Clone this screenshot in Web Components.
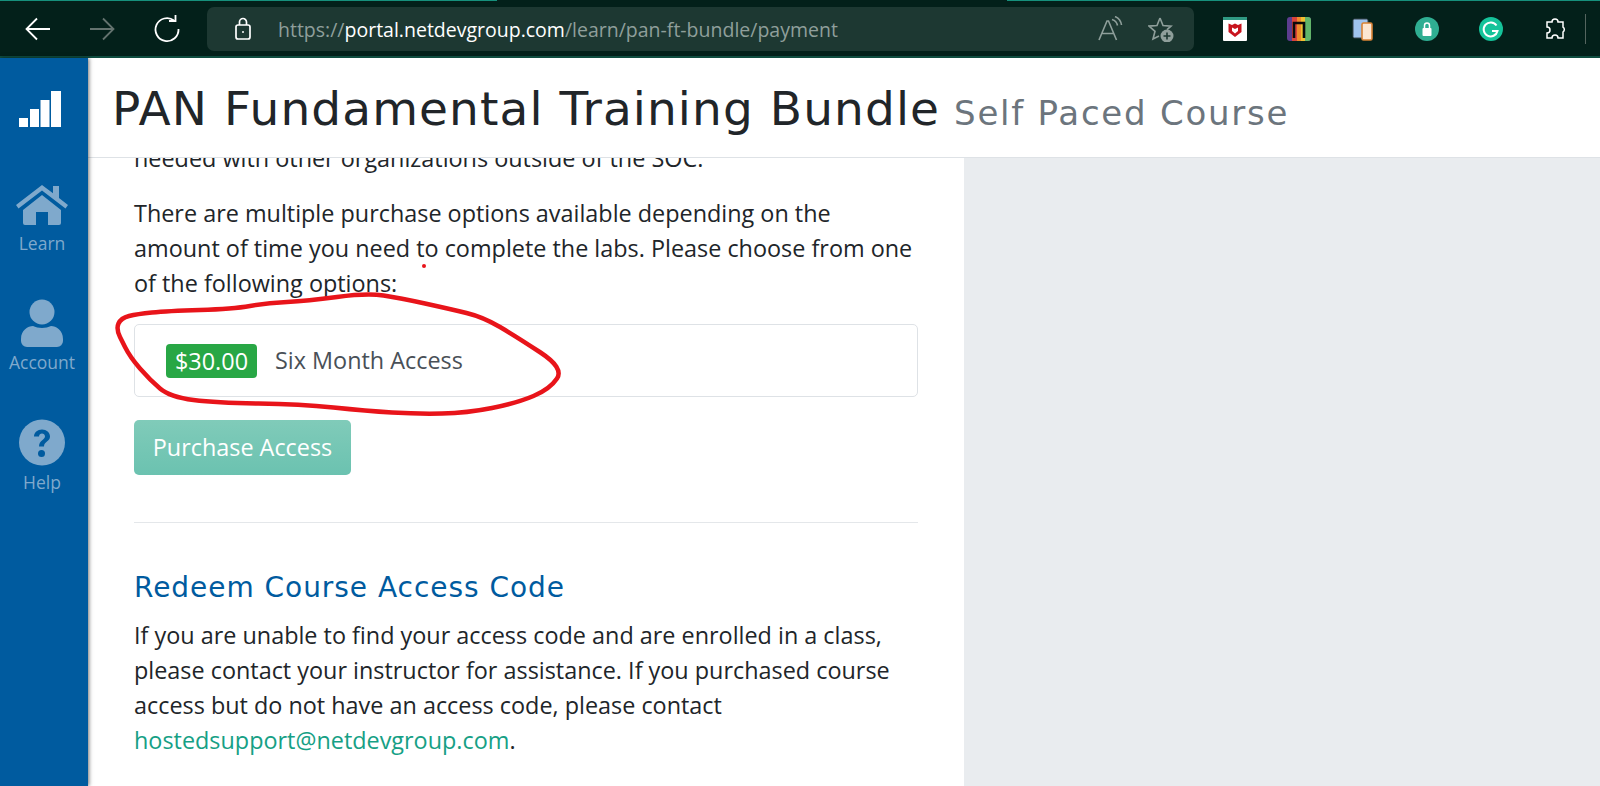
<!DOCTYPE html>
<html>
<head>
<meta charset="utf-8">
<style>
html, body { margin: 0; height: 100%; overflow: hidden; }
body { font-family: "Open Sans", sans-serif; display: flex; flex-direction: column; background: #fff; }
</style>
</head>
<body>
<browser-bar></browser-bar>
<page-shell>
  <side-nav slot="nav"></side-nav>
  <page-header slot="head" title-text="PAN Fundamental Training Bundle" sub-text="Self Paced Course"></page-header>
  <course-panel slot="main"></course-panel>
</page-shell>

<script>
const barTemplate = document.createElement('template')
barTemplate.innerHTML = `
<style>
:host { display: block; flex: none; height: 58px; box-sizing: border-box; background: #03201a; position: relative; border-bottom: 2px solid #0f4d40; }
#wrapper { display: flex; align-items: center; height: 56px; padding-left: 22px; padding-top: 2px; box-sizing: border-box; }
.line { position: absolute; top: 0; height: 1px; background: #16907c; }
.nav { width: 30px; height: 30px; flex: none; }
.nav + .nav { margin-left: 35px; }
#address { margin-left: 25px; width: 987px; height: 44px; box-sizing: border-box; background: #1d3832; border-radius: 7px; display: flex; align-items: center; padding: 0 20px 0 27px; flex: none; }
#url { margin-left: 26px; font: 19.5px "Open Sans", sans-serif; color: #8f9f9b; flex: 1; white-space: nowrap; }
#url b { font-weight: 400; color: #fff; }
.tool { width: 26px; height: 26px; flex: none; }
.tool + .tool { margin-left: 24px; }
#exts { display: flex; align-items: center; margin-left: 29px; gap: 40px; }
#divider { width: 1px; height: 30px; background: #55655f; margin-left: 18px; }
</style>
<div class="line" style="left:0;width:497px"></div>
<div class="line" style="left:1007px;right:0"></div>
<div id="wrapper">
  <svg class="nav" viewBox="0 0 30 30" fill="none" stroke="#fff" stroke-width="1.8"><path d="M28 15H5M15 4.500L4.500 15 15 25.500"/></svg>
  <svg class="nav" viewBox="0 0 30 30" fill="none" stroke="#64736f" stroke-width="1.8"><path d="M3 15h23M16 4.500L26.500 15 16 25.500"/></svg>
  <svg class="nav" viewBox="0 0 30 30" fill="none" stroke="#fff" stroke-width="1.8"><path d="M22 6.500A11.500 11.500 0 1 0 26.500 15"/><path d="M17 7h6.500V1"/></svg>
  <div id="address">
    <svg width="18" height="24" viewBox="0 0 18 24" fill="none" stroke="#fff" stroke-width="1.7"><rect x="2" y="8" width="14" height="14" rx="2"/><path d="M5.500 8V5a3.500 3.500 0 0 1 7 0v3"/><circle cx="9" cy="15" r="1" fill="#fff" stroke="none"/></svg>
    <div id="url">https://<b>portal.netdevgroup.com</b>/learn/pan-ft-bundle/payment</div>
    <svg class="tool" viewBox="0 0 26 26" fill="none" stroke="#8f9f9b" stroke-width="1.6"><path d="M1 24L9 5h1.500l8 19M4 17.500h12"/><path d="M14 3.500c3 1 5 3 5.500 6M17 .5c3.500 1.500 6 5 6.500 8.500"/></svg>
    <svg class="tool" viewBox="0 0 26 26" fill="none" stroke="#8f9f9b" stroke-width="1.6"><path d="M12 2l3 7.500 8 .6-4 3.500M12 2L9 9.500l-8 .6 6 5.200L5 23l6-3"/><circle cx="19" cy="20" r="6.500" fill="#8f9f9b" stroke="none"/><path d="M19 16.500v7M15.500 20h7" stroke="#1d3832" stroke-width="1.6"/></svg>
  </div>
  <div id="exts">
    <svg width="24" height="24" viewBox="0 0 24 24"><rect width="24" height="24" rx="1" fill="#fff"/><rect width="24" height="3" fill="#2f9a83"/><path d="M5.500 6.500l3.500 1.500 3-1.500 3 1.500 3.500-1.500v8.500l-6.500 5-6.500-5z" fill="#c8141e"/><path d="M9 10.500l3 1.500 3-1.500v3.500l-3 2.500-3-2.500z" fill="#fff"/></svg>
    <svg width="24" height="24" viewBox="0 0 24 24"><rect width="24" height="24" rx="3" fill="#5c3d8f"/><rect x="5" width="5" height="24" fill="#d8433a"/><rect x="10" width="4" height="24" fill="#ef8a2c"/><rect x="14" width="4" height="24" fill="#f0c030"/><path d="M18 0h3a3 3 0 0 1 3 3v18a3 3 0 0 1-3 3h-3z" fill="#62b56a"/><path d="M7 21V6h10v15" fill="none" stroke="#0b0b0b" stroke-width="2.600"/></svg>
    <svg width="24" height="24" viewBox="0 0 24 24"><rect x="2" y="2" width="15" height="19" rx="1.500" fill="#9fc3ee" stroke="#36424a"/><rect x="11" y="6" width="10" height="17" rx="1.500" fill="#fde6d2" stroke="#d98235" stroke-width="1.600"/></svg>
    <svg width="24" height="24" viewBox="0 0 24 24"><circle cx="12" cy="12" r="12" fill="#2fae92"/><rect x="7.500" y="11" width="9" height="8" rx="1" fill="#fff"/><path d="M9.500 11V8.500a2.500 2.500 0 0 1 5 0V11" fill="none" stroke="#fff" stroke-width="1.500"/></svg>
    <svg width="24" height="24" viewBox="0 0 24 24"><circle cx="12" cy="12" r="12" fill="#15c39a"/><path d="M17.500 8.500A7 7 0 1 0 18.500 14H13" fill="none" stroke="#fff" stroke-width="2"/></svg>
    <svg width="24" height="24" viewBox="0 0 24 24" fill="none" stroke="#fff" stroke-width="1.500"><path d="M9 5a3 3 0 0 1 6 0h5v5a3 3 0 0 1 0 5v6h-5a3 3 0 0 0-6 0H4v-5a3 3 0 0 0 0-6V5z"/></svg>
  </div>
  <div id="divider"></div>
</div>
`
customElements.define('browser-bar',
  class extends HTMLElement {
    constructor () {
      super()
      this.attachShadow({ mode: 'open' })
        .appendChild(barTemplate.content.cloneNode(true))
    }
  }
)

const shellTemplate = document.createElement('template')
shellTemplate.innerHTML = `
<style>
:host { display: flex; flex: 1; min-height: 0; }
#right { flex: 1; min-width: 0; display: flex; flex-direction: column; }
#body { flex: 1; min-height: 0; overflow: hidden; display: flex; background: #e9ecef; }
</style>
<slot name="nav"></slot>
<div id="right">
  <slot name="head"></slot>
  <div id="body"><slot name="main"></slot></div>
</div>
`
customElements.define('page-shell',
  class extends HTMLElement {
    constructor () {
      super()
      this.attachShadow({ mode: 'open' })
        .appendChild(shellTemplate.content.cloneNode(true))
    }
  }
)

const navTemplate = document.createElement('template')
navTemplate.innerHTML = `
<style>
:host { display: flex; flex-direction: column; align-items: center; flex: none; width: 88px; box-sizing: border-box; padding-right: 4px; background: #005b9f; box-shadow: 1px 0 4px rgba(0,0,0,.55); position: relative; z-index: 2; font: 17.500px/24px "Open Sans", sans-serif; color: #7fa9cc; }
#logo { margin-top: 33px; margin-right: 4px; }
.item { display: flex; flex-direction: column; align-items: center; }
svg { display: block; }
</style>
<svg id="logo" width="42" height="36" viewBox="0 0 42 36" fill="#fff"><rect x="0" y="27" width="9" height="9"/><rect x="11" y="18" width="9" height="18"/><rect x="21.500" y="9" width="9" height="27"/><rect x="32" y="0" width="10" height="36"/></svg>
<div class="item" style="margin-top:56px">
  <svg width="54" height="42" viewBox="0 0 54 42" fill="#7fa9cc"><path d="M27 2L1 22l2.500 3.500L27 7.500l23.500 18L53 22l-9-7V3h-6v7.300z"/><path d="M8 27L27 12l19 15v13a2 2 0 0 1-2 2H33V29H21v13H10a2 2 0 0 1-2-2z"/></svg>
  <span style="margin-top:6px">Learn</span>
</div>
<div class="item" style="margin-top:44px">
  <svg width="42" height="48" viewBox="0 0 42 48" fill="#7fa9cc"><circle cx="21" cy="13" r="12.500"/><path d="M0 40c0-9 7-13 12-13 5 2.500 13 2.500 18 0 5 0 12 4 12 13v2a6 6 0 0 1-6 6H6a6 6 0 0 1-6-6z"/></svg>
  <span style="margin-top:3px">Account</span>
</div>
<div class="item" style="margin-top:45px">
  <svg width="46" height="47" viewBox="0 0 46 46"><circle cx="23" cy="23" r="23" fill="#7fa9cc"/><path d="M15 17c0-4 3.500-7 8-7s8 3 8 7c0 5-6 5-6 10h-5c0-6 6-7 6-10 0-2-1.500-3-3-3s-3 1-3 3z" fill="#005b9f"/><circle cx="22.500" cy="34" r="3.500" fill="#005b9f"/></svg>
  <span style="margin-top:4px">Help</span>
</div>
`
customElements.define('side-nav',
  class extends HTMLElement {
    constructor () {
      super()
      this.attachShadow({ mode: 'open' })
        .appendChild(navTemplate.content.cloneNode(true))
    }
  }
)

const headerTemplate = document.createElement('template')
headerTemplate.innerHTML = `
<style>
:host { display: flex; flex: none; align-items: baseline; height: 100px; box-sizing: border-box; padding: 21px 0 0 24px; background: #fff; border-bottom: 1px solid #dee2e6; position: relative; z-index: 1; white-space: nowrap; font-family: "DejaVu Sans", sans-serif; }
#title { font-size: 47px; letter-spacing: 1.100px; line-height: 60px; color: #212529; font-weight: 400; margin: 0; }
#sub { font-size: 34px; letter-spacing: 1.750px; color: #6c757d; margin-left: 14px; }
</style>
<h1 id="title"></h1><span id="sub"></span>
`
customElements.define('page-header',
  class extends HTMLElement {
    constructor () {
      super()
      this.attachShadow({ mode: 'open' })
        .appendChild(headerTemplate.content.cloneNode(true))
      this.shadowRoot.querySelector('#title').textContent = this.getAttribute('title-text')
      this.shadowRoot.querySelector('#sub').textContent = this.getAttribute('sub-text')
    }
  }
)

const inkPoints = [[120, 337], [116, 329], [121, 318], [137, 314], [167, 311], [233, 309], [267, 303], [307, 301], [367, 293], [400, 298], [450, 309], [483, 317], [517, 337], [564, 368], [550, 389], [517, 403], [467, 413], [417, 414], [367, 411], [300, 404], [217, 403], [170, 397], [150, 380], [130, 357], [120, 337]]

const panelTemplate = document.createElement('template')
panelTemplate.innerHTML = `
<style>
:host { display: block; width: 876px; flex: none; box-sizing: border-box; padding: 0 46px; background: #fff; font: 23.400px/35px "Open Sans", sans-serif; color: #212529; position: relative; }
p { margin: 0; }
#cut { margin-top: -17px; }
#intro { margin-top: 20px; }
#option { margin-top: 23px; height: 73px; box-sizing: border-box; border: 1px solid #dee2e6; border-radius: 5px; display: flex; align-items: center; padding-left: 31px; color: #495057; }
#price { background: #28a745; color: #fff; border-radius: 4px; height: 34px; line-height: 34px; width: 91px; text-align: center; margin-right: 18px; }
#buy { display: block; margin-top: 23px; width: 217px; height: 55px; border: 0; border-radius: 5px; background: linear-gradient(#80cbb9, #6bc2b0); color: #fff; font: inherit; padding: 0; }
hr { border: 0; border-top: 1px solid #e4e7ea; margin: 47px 0 0; }
h2 { margin: 43px 0 0; font: 400 28px/44px "DejaVu Sans", sans-serif; letter-spacing: .960px; color: #005b9f; }
a { color: #16a085; text-decoration: none; }
#help { margin-top: 8px; }
#ink { position: absolute; left: 0; top: 0; overflow: visible; pointer-events: none; }
</style>
<p id="cut">needed with other organizations outside of the SOC.</p>
<p id="intro">There are multiple purchase options available depending on the amount of time you need to complete the labs. Please choose from one of the following options:</p>
<div id="option"><span id="price">$30.00</span><span>Six Month Access</span></div>
<button id="buy">Purchase Access</button>
<hr>
<h2>Redeem Course Access Code</h2>
<p id="help">If you are unable to find your access code and are enrolled in a class, please contact your instructor for assistance. If you purchased course access but do not have an access code, please contact <a>hostedsupport@netdevgroup.com</a>.</p>
<svg id="ink" width="876" height="628" viewBox="88 158 876 628" fill="none" stroke="#e8141a" stroke-width="4.500" stroke-linecap="round" stroke-linejoin="round">
  <path id="loop"/>
  <circle cx="424" cy="266" r="2" fill="#e8141a" stroke="none"/>
</svg>
`
customElements.define('course-panel',
  class extends HTMLElement {
    constructor () {
      super()
      this.attachShadow({ mode: 'open' })
        .appendChild(panelTemplate.content.cloneNode(true))

      // smooth the hand drawn loop through the midpoints
      let d = `M${inkPoints[0].join(' ')}`
      for (let i = 1; i < inkPoints.length - 1; i++) {
        const [x, y] = inkPoints[i]
        const [nx, ny] = inkPoints[i + 1]
        d += `Q${x} ${y} ${(x + nx) / 2} ${(y + ny) / 2}`
      }
      d += `L${inkPoints[inkPoints.length - 1].join(' ')}`
      this.shadowRoot.querySelector('#loop').setAttribute('d', d)
    }
  }
)
</script>
</body>
</html>
